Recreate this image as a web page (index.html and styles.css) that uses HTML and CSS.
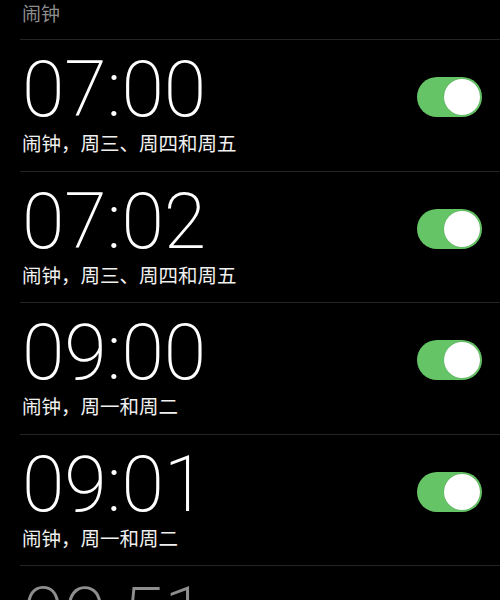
FILE: index.html
```html
<!DOCTYPE html>
<html>
<head>
<meta charset="utf-8">
<link rel="stylesheet" href="styles.css">
</head>
<body>
<div class="screen">
  <div class="header">闹钟</div>
  <div class="list">
    <div class="row">
      <div class="info">
        <div class="time">07:00</div>
        <div class="label">闹钟，周三、周四和周五</div>
      </div>
      <div class="toggle on"><div class="knob"></div></div>
    </div>
    <div class="row">
      <div class="info">
        <div class="time">07:02</div>
        <div class="label">闹钟，周三、周四和周五</div>
      </div>
      <div class="toggle on"><div class="knob"></div></div>
    </div>
    <div class="row">
      <div class="info">
        <div class="time">09:00</div>
        <div class="label">闹钟，周一和周二</div>
      </div>
      <div class="toggle on"><div class="knob"></div></div>
    </div>
    <div class="row">
      <div class="info">
        <div class="time">09:01</div>
        <div class="label">闹钟，周一和周二</div>
      </div>
      <div class="toggle on"><div class="knob"></div></div>
    </div>
    <div class="row off">
      <div class="info">
        <div class="time">09:51</div>
        <div class="label">闹钟，周一和周二</div>
      </div>
      <div class="toggle"><div class="knob"></div></div>
    </div>
  </div>
</div>
</body>
</html>
```
FILE: styles.css
```css
html, body {
  margin: 0;
  padding: 0;
  background: #000;
}
.screen {
  width: 500px;
  height: 600px;
  overflow: hidden;
  background: #000;
  font-family: Roboto, "Noto Sans CJK SC", sans-serif;
  color: #fff;
}
.header {
  padding-left: 22px;
  font-size: 19px;
  line-height: 26px;
  height: 39px;
  color: #8d8d8d;
  font-family: "Noto Sans CJK SC", sans-serif;
}
.list {
  margin-left: 20px;
}
.row {
  height: 131.5px;
  border-top: 1px solid #242426;
  display: flex;
  align-items: flex-start;
  justify-content: space-between;
  box-sizing: border-box;
}
.info {
  padding-left: 2px;
  padding-top: 18px;
}
.time {
  font-family: Roboto, sans-serif;
  font-weight: 200;
  font-size: 77px;
  line-height: 64px;
}
.label {
  font-family: "Noto Sans CJK SC", sans-serif;
  font-size: 19.5px;
  line-height: 26px;
  margin-top: 8px;
  color: #f0f0f0;
}
.toggle {
  width: 65px;
  height: 40px;
  border-radius: 20px;
  background: #65c466;
  margin-top: 37px;
  margin-right: 18px;
  position: relative;
}
.knob {
  position: absolute;
  top: 2px;
  right: 2px;
  width: 36px;
  height: 36px;
  border-radius: 50%;
  background: #fff;
  box-shadow: 0 0 1px rgba(0, 0, 0, 0.3);
}
.row.off .time, .row.off .label {
  color: #8e8e8e;
}
.row.off .toggle {
  background: #39393d;
}
.row.off .knob {
  right: auto;
  left: 2px;
}
```
